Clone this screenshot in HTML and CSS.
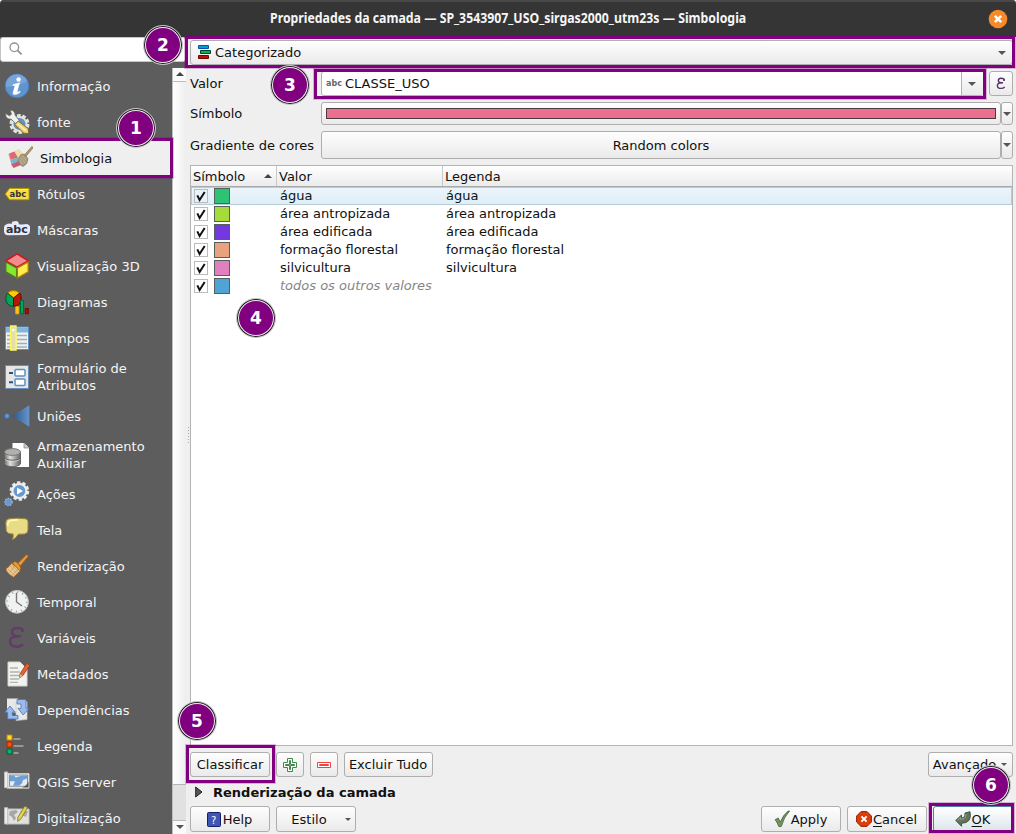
FILE: index.html
```html
<!DOCTYPE html>
<html lang="pt-BR">
<head>
<meta charset="utf-8">
<title>Propriedades da camada</title>
<link rel="stylesheet" href="styles.css">
</head>
<body>
<div class="window">
  <header class="titlebar"><span class="title">Propriedades da camada — SP_3543907_USO_sirgas2000_utm23s — Simbologia</span>
    <svg class="close" viewBox="0 0 20 20"><circle cx="10" cy="10" r="9.3" fill="#f68a2b"/><path d="M6.8 6.8l6.4 6.4M13.2 6.8l-6.4 6.4" stroke="#fff" stroke-width="2.5"/></svg>
  </header>
  <div class="body">
    <aside class="side">
      <div class="search"><svg width="14" height="14" viewBox="0 0 14 14" fill="none" stroke="#929292"><circle cx="5.3" cy="5.3" r="4.3" stroke-width="1.3"/><path d="M8.4 8.4L12.6 12.4" stroke-width="1.8"/></svg></div>
      <div class="listwrap">
        <nav class="list">
          <div class="item"><svg viewBox="0 0 26 26"><circle cx="13" cy="13" r="11.8" fill="#5f94cf" stroke="#4a7fbd"/><path d="M2 14A11 11 0 0 1 23 8Q17 13 2 14" fill="#78a4d9"/><circle cx="14.6" cy="6.5" r="2.2" fill="#fff"/><path d="M9 11.8q3-1 6.5-2l-2.5 9.2q.3 1 2.8-.9l.5 1c-2.6 2.8-8 3.6-7.2.7l2-7.2-2.4-.1z" fill="#fff" stroke="#fff" stroke-width=".6"/></svg><span>Informação</span></div>
          <div class="item"><svg viewBox="0 0 26 26"><circle cx="15.5" cy="15" r="8.2" fill="#5784bc" stroke="#e4e4df" stroke-width="3.6" stroke-dasharray="3.4 1.75"/><circle cx="15.5" cy="15" r="7" fill="#658fc5" stroke="#e4e4df" stroke-width="1.8"/><path d="M1.5 4.5l4 2.3 2-1.6L6.2 1.3q4.6-.3 5 5l4 5.2-3.2 3.3-4.8-4.6Q1.4 10.5 1.5 4.5z" fill="#f1f1ef" stroke="#696965" stroke-width=".8"/><path d="M10.8 15.6l3.4-3.6 10 7.6.6 5-5-.4z" fill="#e9d27b" stroke="#826826"/><path d="M13.5 15l8.5 6.8" stroke="#fff0b4" stroke-width="1.5"/></svg><span>fonte</span></div>
          <div class="item selected"><svg viewBox="0 0 26 26"><path d="M.8 9.4L12 4l8 9.7L5.6 22.4z" fill="#d8d5cb"/><path d="M2 8.5l5.5-1.9L11 12.5l-7.5 2.3z" fill="#df6872"/><path d="M7.5 6.6l5-2 4 5.5-5.5 2.4z" fill="#ecdca9"/><path d="M3.5 14.8l7.5-2.3 2 4.6-8.5 3.7z" fill="#76b6cf"/><path d="M4.5 19.5l8-3.7 2 4-8 3.2z" fill="#c95c70"/><path d="M11 12.5l5.5-2.4 3 3.9-6.5 3.1z" fill="#92bd6b"/><path d="M16.8 9.7l1.8-1L24.8 1.5l1.4 1.2-6.4 7.6-.8 1.6z" fill="#b69a68" stroke="#8b7855" stroke-width=".8"/><path d="M13.5 10l2.8-1 4.7 4.5-1.4 5.3-3.6 2.7q-3.7-1.4-5-5.6z" fill="#a99c82" stroke="#857a62" stroke-width=".8"/><path d="M13 12l5.5 6M11.7 14l4.2 5.5M14.7 10.5l4.8 4.8" stroke="#c0b69c" stroke-width=".7"/></svg><span>Simbologia</span></div>
          <div class="item"><svg viewBox="0 0 26 26"><path d="M1.3 13L5.6 7.4H25V18.7H5.6z" fill="#f8dc42" stroke="#b99900"/><path d="M6 14V8.5h18" fill="none" stroke="#fff176"/><text x="5.6" y="16.3" class="abc small">abc</text></svg><span>Rótulos</span></div>
          <div class="item"><svg viewBox="0 0 26 26"><path d="M2.2 7.6Q4.5 5.7 7.7 7.1 7.3 3.8 11 4.2q3.4-.6 4 3 4 .5 8-.3 4 1.2 3 5.8.1 5-3.6 5.2L5 18.3Q-.4 19-.2 12 0 8 2.2 7.6z" fill="#e5eaff"/><text x="1.9" y="16" class="abc mask">abc</text></svg><span>Máscaras</span></div>
          <div class="item"><svg viewBox="0 0 26 26"><path d="M1.8 7.8L13 .8 24.3 7.8 13 14.2z" fill="#f28c8c" stroke="#d0151e" stroke-width="1.5"/><path d="M1.8 9L12.6 15v10L1.8 18.9z" fill="#88e532" stroke="#497b1f" stroke-width="1.3"/><path d="M24.2 9L13.4 15v10l10.8-6.1z" fill="#ffeb4c" stroke="#a27d16" stroke-width="1.3"/></svg><span>Visualização 3D</span></div>
          <div class="item"><svg viewBox="0 0 26 26"><path d="M9.5 9L3.4 4Q9.2-1 15.8 4z" fill="#ffca00" stroke="#ab7c00"/><path d="M9.5 9v8.3Q2 17 1.8 9.5 1.8 6.5 3.4 4z" fill="#00a557" stroke="#05502e"/><path d="M9.5 9v8.3Q17 17 17.2 10 17.4 6.5 15.8 4z" fill="#b81705" stroke="#650b07"/><path fill="#ffc629" stroke="#f0b000" d="M11.8 17.8h3v7h-3z"/><path fill="#00a65b" stroke="#006a37" d="M16.5 11.5h3v13.3h-3z"/><path fill="#a51505" stroke="#750b05" d="M21.2 19.5h3.2v5.3h-3.2z"/></svg><span>Diagramas</span></div>
          <div class="item"><svg viewBox="0 0 26 26"><path fill="#f2f2ed" stroke="#5d8fc4" d="M1.5 2h23v22.5h-23z"/><path fill="#83b6df" d="M2 2.5h22v5H2z"/><path d="M3 10.5h6m4 0h10M3 14.5h6m4 0h10M3 18.5h6m4 0h10M3 22h6m4 0h10" stroke="#98afc5" stroke-width="1.6"/><path fill="#e4ddae" stroke="#fbf65a" stroke-width="1.6" d="M6.7 1h5.2v24H6.7z"/><circle cx="9.3" cy="5" r="1.2" fill="#fff"/></svg><span>Campos</span></div>
          <div class="item tall"><svg viewBox="0 0 26 26"><path fill="#e5e6e5" stroke="#668dbc" d="M1.5 1.5h23v23h-23z"/><path d="M5 9h4M5 18.3h4" stroke="#344e71" stroke-width="2"/><rect x="11" y="5.5" width="10" height="6.6" rx="1" fill="white" stroke="#5d8fc3" stroke-width="1.5"/><rect x="11" y="15" width="10" height="6.6" rx="1" fill="white" stroke="#5d8fc3" stroke-width="1.5"/></svg><span>Formulário de<br>Atributos</span></div>
          <div class="item"><svg viewBox="0 0 26 26"><defs><linearGradient id="join"><stop stop-color="#2c5687"/><stop offset="1" stop-color="#6595cb"/></linearGradient></defs><path d="M25.3 2.2v21.5L8 13z" fill="url(#join)"/><circle cx="3" cy="13" r="2.5" fill="#6698d2" stroke="#3d6ca0"/></svg><span>Uniões</span></div>
          <div class="item tall"><svg viewBox="0 0 26 26"><path d="M8.5 1H20l5 5v19H8.5z" fill="#fff"/><path d="M20 1v5h5" fill="#ccc" stroke="#707070" stroke-width=".6"/><defs><linearGradient id="disk"><stop stop-color="#70706c"/><stop offset=".35" stop-color="#dfdfdb"/><stop offset="1" stop-color="#646462"/></linearGradient></defs><path d="M.5 10v12c2 3.5 14 3.5 16 0V10z" fill="url(#disk)" stroke="#666"/><ellipse cx="8.5" cy="10" rx="8" ry="3.4" fill="#b0b0b0" stroke="#777"/><path d="M.5 16c2 3 14 3 16 0" fill="none" stroke="#555"/><path d="M1 17.2c2 2.7 13 2.7 15 0" fill="none" stroke="#eee" stroke-width=".6"/></svg><span>Armazenamento<br>Auxiliar</span></div>
          <div class="item"><svg viewBox="0 0 26 26"><circle cx="15.4" cy="10" r="8.5" fill="#5d8cc2" stroke="#ecece9" stroke-width="2.7" stroke-dasharray="3.3 2.05"/><circle cx="15.4" cy="10" r="7" fill="#6698d1" stroke="#eeeeeb" stroke-width="2.2"/><path d="M13 6.6l6 3.4-6 3.4z" fill="#fff"/><circle cx="4.5" cy="21" r="3.6" fill="#6799d0" stroke="#93b3d4" stroke-dasharray="1.6 1" stroke-width="1.4"/></svg><span>Ações</span></div>
          <div class="item"><svg viewBox="0 0 26 26"><path d="M5 1.8Q13 .5 21.5 1.8q2.5.3 2.5 3v8q0 4-3.7 4.2l-6 .2q-2 4-6 5.5 1.4-3 .8-5.7Q3 17 2.2 13.5L1.8 6q-.2-3.8 3.2-4.2z" fill="#e9dc86" stroke="#9b8739"/><path d="M3.8 9q-.4-5.2 3.2-5.7l7-.4" fill="none" stroke="#fff6b9" stroke-width="1.7"/></svg><span>Tela</span></div>
          <div class="item"><svg viewBox="0 0 26 26"><path d="M12.2 12L22.4 1.8q2-.4 1.7 1.8L15.5 14z" fill="#e49b3e" stroke="#a35d19"/><path d="M8 9.8l3.6-1.4q4.5 3 5.4 6.7l-1 3z" fill="#de9d3d" stroke="#9b5a1e"/><path d="M7.5 10.2Q11.7 13 16.2 18l-6.6 6.2q-7-3.8-7.8-8.3 3.2-1.8 5.7-5.7z" fill="#ecc68a" stroke="#96632e" stroke-width=".8"/><path d="M4 16l7 6.5M6 13l7 7.5M7.8 11.7l7 7.4M8 23l6.2-7.3M5 20l6-7.5" stroke="#c49858" stroke-width=".6"/></svg><span>Renderização</span></div>
          <div class="item"><svg viewBox="0 0 26 26"><circle cx="13" cy="12.8" r="11.4" fill="#f1f1ed" stroke="#c7c7bd"/><circle cx="13" cy="12.8" r="9.7" fill="none" stroke="#6d9ed2" stroke-width="1.7" stroke-dasharray="1 4.08"/><path d="M12.5 3.8v9.2l5.6 4" fill="none" stroke="#777" stroke-width="1.4"/></svg><span>Temporal</span></div>
          <div class="item"><svg viewBox="0 0 26 26"><path d="M18.5 7V4.8Q17 3 13.5 3 8 3 8 7.3q0 3.8 6.5 4-8.5.2-8.5 5.3 0 5.2 6.7 5.2 4 0 6.3-2.7" fill="none" stroke="#67396f" stroke-width="2.5"/><path d="M17 5.8h2M13 11.3h4" stroke="#67396f" stroke-width="2.5"/></svg><span>Variáveis</span></div>
          <div class="item"><svg viewBox="0 0 26 26"><path d="M4 1h12l7 7v17H4z" fill="#f2f2ef" stroke="#d3d3d0"/><path d="M6 7h8m-8 4h10M6 14.5h12M6 18h9M6 21.3h8" stroke="#b2b2b2" stroke-width="1.3"/><path d="M16 13L22.7 2.3l3.2 2-7.2 10.5-3.2 2.2z" fill="#e6632d" stroke="#9f3618" stroke-width=".8"/><path d="M16 13l2.7 1.8-3.5 2.7z" fill="#d4b988"/></svg><span>Metadados</span></div>
          <div class="item"><svg viewBox="0 0 26 26"><path fill="#e8e8e5" d="M3 1.5h11v14H3z"/><path fill="#eae9e5" stroke="#c5c5c0" stroke-width=".7" d="M12 5.5l11-1v18l-11 1z"/><path d="M.8 15.2L6 9l5 6H8.3v3.5H14v3.5H3.7v-6.8z" fill="#9bbaf0" stroke="#4577b9" stroke-width=".8"/><path d="M13 2.5h9v8.9h3L19.2 18 14 11.4h3V7h-4z" fill="#9bbaf0" stroke="#4577b9" stroke-width=".8"/></svg><span>Dependências</span></div>
          <div class="item"><svg viewBox="0 0 26 26"><path fill="#ffda26" stroke="#cf8500" d="M3 2h5v5H3z"/><path fill="#ff4b10" stroke="#a72b00" d="M3 9h5v5H3z"/><path fill="#00b969" stroke="#005e32" d="M3 16h5v5H3z"/><path d="M9.5 6h7m-7 7h10m-10 7h5" stroke="#969696" stroke-width="2"/></svg><span>Legenda</span></div>
          <div class="item"><svg viewBox="0 0 26 26"><path d="M3 4.5h22v14.7H3z" fill="#eeeeeb" stroke="#c9c9c5"/><path d="M.5 3h3.3v15.7H.5z" fill="#eee" stroke="#bbb"/><path fill="#e4ebf2" stroke="#777" stroke-width=".8" d="M5.5 6h18v11.3h-18z"/><path d="M6 6.5h4l1.7 2 6.3-2h5v3l-4 1.5-1 3.2-3 2.6H9l2-4.5H6z" fill="#6d9fd4"/><path d="M18 18.5q4-1 6.5-6v6z" fill="#555"/></svg><span>QGIS Server</span></div>
          <div class="item"><svg viewBox="0 0 26 26"><path d="M3 4h22v15H3z" fill="#e1e1df" stroke="#c0c0bd"/><path d="M.5 2.7h3.3V19H.5z" fill="#eee" stroke="#bbb"/><path d="M6 6l6-1 2 2-4 3 2 3-2 3-2-4-3-2zm11 0h7l-2 6-4-2-2-3z" fill="#a6a6a5"/><path d="M14 12L20.8 1l2.6 1.6-6.3 11.2-3.5 2.6z" fill="#e2d34c" stroke="#7d742f" stroke-width=".8"/></svg><span>Digitalização</span></div>
        </nav>
        <div class="scroll"><div class="sbtn"><i class="tri up"></i></div><div class="thumb"></div><div class="track"></div><div class="sbtn bottom"><i class="tri"></i></div></div>
      </div>
    </aside>
    <div class="splitter"></div>
    <main class="panel">
      <div class="btn combo"><svg width="14" height="15" viewBox="0 0 14 15"><path fill="#009eca" stroke="#0054b4" d="M.5 .5h10v3H.5z"/><path fill="#00b65c" stroke="#003f26" d="M2.5 5.5h10v3h-10z"/><path fill="#c40d00" stroke="#6b0704" d="M.5 10.5h10v3H.5z"/></svg><span>Categorizado</span><i class="tri"></i></div>
      <div class="row value"><label>Valor</label><div class="field"><span class="abctag">abc</span><span>CLASSE_USO</span><div class="drop"><i class="tri"></i></div></div><div class="btn eps"><svg width="10" height="13" viewBox="0 0 10 13"><path d="M8 3.4V2Q7 1.2 5 1.2 2.3 1.2 2.3 3.5q0 2.2 3.4 2.3Q1.4 5.9 1.4 8.7q0 2.7 3.6 2.7 2.5 0 3.7-1.6" fill="none" stroke="#593363" stroke-width="1.4"/><path d="M7 3h2M5 5.8h2" stroke="#593363" stroke-width="1.4"/></svg></div></div>
      <div class="row symbol"><label>Símbolo</label><div class="btn fill"><div class="bar"></div></div><div class="btn narrow"><i class="tri"></i></div></div>
      <div class="row ramp"><label>Gradiente de cores</label><div class="btn fill">Random colors</div><div class="btn narrow"><i class="tri"></i></div></div>
      <section class="table">
        <div class="tr head"><div>Símbolo<i class="tri up"></i></div><div>Valor</div><div>Legenda</div></div>
        <div class="tr active"><div><span class="check"><svg viewBox="0 0 12 12"><path d="M2.3 5.4L4.6 10 9.7 2"/></svg></span><b class="swatch green"></b></div><div>água</div><div>água</div></div>
        <div class="tr"><div><span class="check"><svg viewBox="0 0 12 12"><path d="M2.3 5.4L4.6 10 9.7 2"/></svg></span><b class="swatch lime"></b></div><div>área antropizada</div><div>área antropizada</div></div>
        <div class="tr"><div><span class="check"><svg viewBox="0 0 12 12"><path d="M2.3 5.4L4.6 10 9.7 2"/></svg></span><b class="swatch violet"></b></div><div>área edificada</div><div>área edificada</div></div>
        <div class="tr"><div><span class="check"><svg viewBox="0 0 12 12"><path d="M2.3 5.4L4.6 10 9.7 2"/></svg></span><b class="swatch orange"></b></div><div>formação florestal</div><div>formação florestal</div></div>
        <div class="tr"><div><span class="check"><svg viewBox="0 0 12 12"><path d="M2.3 5.4L4.6 10 9.7 2"/></svg></span><b class="swatch pink"></b></div><div>silvicultura</div><div>silvicultura</div></div>
        <div class="tr other"><div><span class="check"><svg viewBox="0 0 12 12"><path d="M2.3 5.4L4.6 10 9.7 2"/></svg></span><b class="swatch blue"></b></div><div>todos os outros valores</div><div></div></div>
      </section>
      <div class="tools">
        <div class="btn classify">Classificar</div>
        <div class="btn icon"><svg width="14" height="14" viewBox="0 0 14 14" fill="white" stroke="#3f8a46"><path d="M4.5.5h5v4h4v5h-4v4h-5v-4h-4v-5h4z"/><path d="M6.5 2.5h1v4h4v1h-4v4h-1v-4h-4v-1h4z"/></svg></div>
        <div class="btn icon minus"><svg width="14" height="6" viewBox="0 0 14 6" fill="white" stroke="#f04444"><path d="M.5.5h13v5H.5zM2.5 2.5h9v1h-9z"/></svg></div>
        <div class="btn clear">Excluir Tudo</div>
        <div class="btn advanced">Avançado<i class="tri tiny"></i></div>
      </div>
      <div class="group"><svg width="8" height="12" viewBox="0 0 8 12"><path d="M.7 1L7 6 .7 11z" fill="#555" stroke="#222"/></svg>Renderização da camada</div>
      <footer>
        <div class="btn help"><svg width="14" height="15" viewBox="0 0 14 15"><rect x=".5" y=".5" width="13" height="14" rx="1" fill="#3e55b5" stroke="#171f67"/><text x="4" y="11.5" class="q">?</text></svg>Help</div>
        <div class="btn style">Estilo<i class="tri tiny"></i></div>
        <div class="btn apply"><svg width="16" height="18" viewBox="0 0 16 18"><path d="M1.2 9.7l3-1.7 2.1 4.2Q9 5 14.2 1h1.3Q9.6 7.5 7.4 16.3L5 16.8Q3.6 13 1.2 9.7z" fill="#75965f" stroke="#405b36" stroke-width=".8"/></svg>Apply</div>
        <div class="btn cancel"><svg width="16" height="16" viewBox="0 0 16 16"><path d="M5 .6h6L15.4 5v6L11 15.4H5L.6 11V5z" fill="#dc3d0a" stroke="#942300"/><path d="M5.4 5.4l5.2 5.2m0-5.2l-5.2 5.2" stroke="white" stroke-width="2"/></svg><span><u>C</u>ancel</span></div>
        <div class="btn ok"><svg width="16" height="16" viewBox="0 0 16 16"><path d="M.7 9.4L6.5 4v3q3.7 0 3.5-5l5-1.3Q17.4 12 6.5 12.3v3z" fill="#61775c" stroke="#384d37" stroke-width=".9"/><path d="M2.2 9.3L5.6 6.3V8.2q5.4.3 5.4-5.2" fill="none" stroke="#98a891"/></svg><span><u>O</u>K</span></div>
      </footer>
    </main>
  </div>
  <div class="outline o1"></div><div class="outline o2"></div><div class="outline o3"></div><div class="outline o5"></div><div class="outline o6"></div>
  <div class="badge b1">1</div><div class="badge b2">2</div><div class="badge b3">3</div><div class="badge b4">4</div><div class="badge b5">5</div><div class="badge b6">6</div>
</div>
</body>
</html>
```
FILE: styles.css
```css
* { box-sizing: border-box; }
body { margin: 0; background: #fff; font: 13px/17px "DejaVu Sans", sans-serif; color: #111; }
.window { position: relative; width: 1016px; height: 834px; overflow: hidden; background: #efefef; display: flex; flex-direction: column; border-radius: 4px 4px 0 0; }
.titlebar { flex: none; height: 37px; background: #353535; border-top: 2px solid #484848; display: grid; grid-template-columns: 1fr 18px; align-items: center; padding-right: 9px; }
.title { width: 542px; margin-left: 270px; margin-bottom: 3px; white-space: nowrap; font: bold 14px/20px "Noto Sans", sans-serif; transform: scaleX(.878); transform-origin: left center; color: #f5f5f5; }
.close { width: 20px; height: 20px; margin: 0 0 2px -1px; }
.body { flex: 1; min-height: 0; display: flex; }
.side { width: 186px; flex: none; display: flex; flex-direction: column; background: #5d5d5d; }
.search { height: 25px; flex: none; background: #fff; border: 1px solid #c6c6c6; border-radius: 3px; padding: 4px 8px; }
.search svg { display: block; }
.listwrap { flex: 1; min-height: 0; display: flex; padding-top: 6px; }
.list { width: 172px; flex: none; color: #f4f4f4; overflow: hidden; }
.item { height: 36px; display: flex; align-items: center; padding-left: 4px; gap: 7px; }
.item.tall { height: 42px; }
.item svg { width: 26px; height: 26px; flex: none; }
.item.selected { background: #efefef; color: #111; padding-left: 7px; }
.abc { font: bold 8.4px "DejaVu Sans", sans-serif; fill: #333; }
.abc.mask { font-size: 11px; fill: #303238; }
.scroll { width: 14px; flex: none; display: flex; flex-direction: column; background: #e1e1e1; border-left: 1px solid #bebebe; }
.sbtn { height: 14px; flex: none; background: #fafafa; border-bottom: 1px solid #bbb; display: flex; justify-content: center; padding-top: 4px; }
.sbtn.bottom { border: 0; border-top: 1px solid #bbb; }
.thumb { height: 703px; background: linear-gradient(90deg,#fff,#eee); border-bottom: 1px solid #b5b5b5; }
.track { flex: 1; }
.tri { width: 0; height: 0; border: 4px solid transparent; border-top: 4px solid #555; border-bottom: 0; }
.tri.up { border-top: 0; border-bottom: 4px solid #444; }
.tri.tiny { border-width: 3px 3px 0; }
.splitter { width: 4px; flex: none; display: flex; align-items: center; }
.splitter::after { content: ""; width: 1px; height: 18px; margin-left: 2px; background: repeating-linear-gradient(#aaa 0 1px, transparent 1px 3px); }
.panel { width: 823px; padding-top: 3px; display: flex; flex-direction: column; }
.btn { background: linear-gradient(#fefefe,#eaeaea); border: 1px solid #aeaeae; border-radius: 3px; display: flex; align-items: center; justify-content: center; white-space: nowrap; }
.combo { height: 25px; flex: none; justify-content: flex-start; gap: 3px; padding: 0 6px 0 7px; }
.combo .tri { margin-left: auto; }
.row { display: flex; align-items: center; }
.row label { width: 131px; flex: none; white-space: nowrap; }
.value { height: 25px; margin-top: 6px; }
.value label { padding-bottom: 1px; }
.field { width: 663px; height: 25px; background: #fff; border: 1px solid #b3b3b3; border-radius: 3px; display: flex; align-items: center; }
.field > span { padding-bottom: 1px; }
.abctag { width: 23px; padding-left: 4px; font: bold 8px "DejaVu Sans", sans-serif; color: #666; }
.drop { width: 22px; height: 100%; margin-left: auto; padding-right: 2px; background: linear-gradient(#fefefe,#eaeaea); border-left: 1px solid #b3b3b3; display: flex; align-items: center; justify-content: center; }
.eps { width: 24px; height: 25px; margin-left: 5px; }
.fill { flex: 1; height: 100%; }
.narrow { width: 12px; height: 100%; }
.symbol { height: 23px; margin-top: 6px; }
.bar { width: 670px; height: 11px; background: #e9718f; border: 1px solid #4b3b3f; }
.ramp { height: 28px; margin-top: 6px; }
.table { height: 581px; flex: none; margin-top: 6px; background: #fff; border: 1px solid #b4b4b4; }
.tr { height: 18px; display: grid; grid-template-columns: 86px 166px 1fr; }
.tr > div { padding-left: 3px; display: flex; align-items: center; }
.tr:not(.head) > div + div { padding: 0 0 1px 3px; }
.tr.head { height: 21px; grid-template-columns: 85px 166px 1fr; background: linear-gradient(#fff,#ebebeb); border-bottom: 1px solid #aaa; }
.head > div { padding-left: 2px; }
.head > div + div { border-left: 1px solid #c9c9c9; }
.head .tri { margin-left: auto; margin-right: 4px; }
.active { background: linear-gradient(#eaf5fd,#e0edf5); box-shadow: inset 0 0 0 1px #b4cddb; }
.check { width: 14px; height: 14px; flex: none; border: 1px solid #bbb; background: #fff; }
.active .check { background: #e8f2f9; }
.check svg { display: block; width: 12px; height: 12px; fill: none; stroke: #111; stroke-width: 2; }
.swatch { width: 16px; height: 16px; margin-left: 6px; border: 1px solid #53615c; }
.green { background: #2cc474; }
.lime { background: #a5dc3b; }
.violet { background: #7439de; }
.orange { background: #e9a27e; }
.pink { background: #e180bf; }
.blue { background: #50a4d5; }
.other > div + div { font-style: italic; color: #858585; }
.tools { display: flex; margin-top: 6px; height: 25px; flex: none; }
.classify { width: 80px; }
.icon { width: 28px; margin-left: 6px; }
.clear { width: 89px; margin-left: 6px; padding-right: 1px; }
.advanced { width: 85px; margin-left: auto; gap: 5px; padding-right: 1px; }
.group { height: 20px; margin-top: 5px; flex: none; display: flex; align-items: center; padding-left: 5px; gap: 10px; font-weight: bold; }
footer { height: 26px; margin-top: 4px; display: flex; flex: none; }
footer .btn { width: 80px; gap: 1px; padding-right: 1px; }
footer .help { gap: 2px; }
footer .style { margin-left: 6px; gap: 18px; padding: 0 0 0 10px; }
footer .apply { margin-left: auto; }
footer .cancel { margin-left: 6px; }
footer .ok { margin-left: 6px; border-color: #4e83a7; background: linear-gradient(#fff,#dce5ea); }
u { text-underline-offset: 2px; }
.q { font: 10px "DejaVu Sans", sans-serif; fill: #fff; }
.outline { position: absolute; border: 3px solid #800080; box-shadow: 0 0 0 1px rgba(128,0,128,.25); }
.o1 { left: -3px; top: 138px; width: 176px; height: 40px; }
.o2 { left: 185px; top: 36px; width: 830px; height: 32px; }
.o3 { left: 314px; top: 69px; width: 672px; height: 30px; }
.o5 { left: 186px; top: 745px; width: 89px; height: 38px; }
.o6 { left: 929px; top: 803px; width: 85px; height: 30px; }
.badge { position: absolute; width: 40px; height: 40px; border-radius: 50%; background: #800080; border: 1px solid #ccc; box-shadow: inset 0 0 0 1px #111, inset 0 0 0 2px #eee; color: #fff; display: flex; align-items: center; justify-content: center; font-size: 17px; font-weight: bold; }
.b1 { left: 116px; top: 108px; }
.b2 { left: 143px; top: 25px; }
.b3 { left: 270px; top: 65px; }
.b4 { left: 236px; top: 298px; }
.b5 { left: 177px; top: 701px; }
.b6 { left: 971px; top: 765px; }
```
